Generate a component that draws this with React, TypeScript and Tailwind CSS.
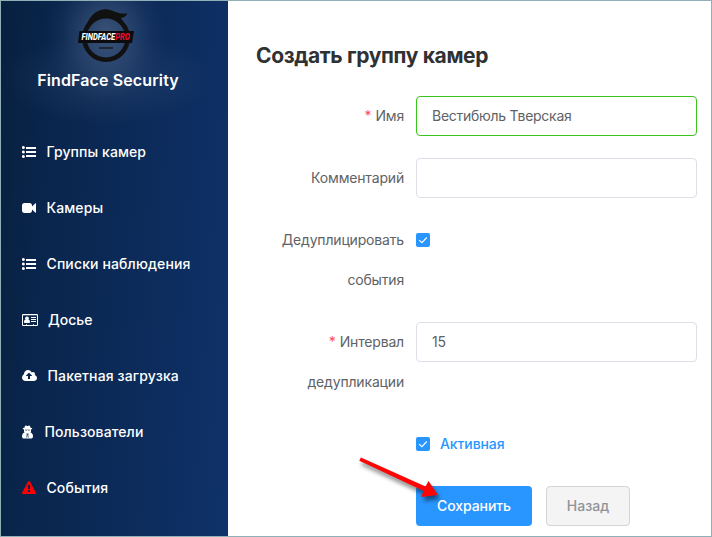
import type { ReactNode } from 'react';

const ListIcon = () => (
  <svg width="14" height="14" viewBox="0 0 14 14" fill="currentColor">
    <circle cx="1.4" cy="2.5" r="1.5" />
    <circle cx="1.4" cy="7" r="1.5" />
    <circle cx="1.4" cy="11.5" r="1.5" />
    <path d="M4 2h10v2H4zM4 6h10v2H4zM4 10h10v2H4z" />
  </svg>
);

const CameraIcon = () => (
  <svg width="14" height="14" viewBox="0 0 1792 1792" fill="currentColor">
    <path d="M1792 352v1088q0 42-39 59-13 5-25 5-27 0-45-19l-403-403v166q0 119-84.5 203.5t-203.5 84.5h-704q-119 0-203.5-84.5t-84.5-203.5v-704q0-119 84.5-203.5t203.5-84.5h704q119 0 203.5 84.5t84.5 203.5v165l403-402q18-19 45-19 12 0 25 5 39 17 39 59z" />
  </svg>
);

const CardIcon = () => (
  <svg width="16" height="14" viewBox="0 0 16 14" fill="currentColor">
    <path fillRule="evenodd" d="M1.2 1h13.6Q16 1 16 2.2v9.6Q16 13 14.8 13H1.2Q0 13 0 11.8V2.2Q0 1 1.2 1zM1 3v8.7q0 .3.3.3H4v-.8h1v.8h6v-.8h1v.8h2.7q.3 0 .3-.3V3q0-.8-.3-.8H1.3Q1 2.2 1 3z" />
    <circle cx="5" cy="5.3" r="1.9" />
    <path d="M2 9.2c0-1.8.6-2.7 1.6-2.7.8.7 2 .7 2.8 0C7.4 6.5 8 7.4 8 9.2q0 .8-.9.8H2.9Q2 10 2 9.2zM9 4h5v1H9zM9 6h5v1H9zM9 8h5v1H9z" />
  </svg>
);

const CloudIcon = () => (
  <svg width="15" height="14" viewBox="0 0 1920 1792" fill="currentColor">
    <path d="M1280 864q0-14-9-23l-352-352q-9-9-23-9t-23 9l-351 351q-10 12-10 24 0 14 9 23t23 9h224v352q0 13 9.5 22.5t22.5 9.5h192q13 0 22.5-9.5t9.5-22.5v-352h224q13 0 22.5-9.5t9.5-22.5zm640 288q0 159-112.5 271.5t-271.5 112.5h-1088q-185 0-316.5-131.5t-131.5-316.5q0-130 70-240t188-165q-2-30-2-43 0-212 150-362t362-150q156 0 285.5 87t188.5 231q71-62 166-62 106 0 181 75t75 181q0 76-41 138 130 31 213.5 135.5t83.5 238.5z" />
  </svg>
);

const AgentIcon = () => (
  <svg width="11" height="14" viewBox="0 0 11 14" fill="currentColor">
    <path fillRule="evenodd" d="M3.7.5c.7 0 1.1.4 1.8.4S6.6.5 7.3.5c.7 0 1 1.2 1.3 2.3 1 .2 1.7.5 1.7.8s-.5.6-1.3.8v1.8c0 .6-.2 1-.5 1.4C10.3 8.2 11 9.7 11 11.2c0 1.5-.8 2.3-2 2.3H2c-1.2 0-2-.8-2-2.3 0-1.5.7-3 2.5-3.6C2.2 7.2 2 6.8 2 6.2V4.4C1.2 4.2.7 3.9.7 3.6s.7-.6 1.7-.8C2.7 1.7 3 .5 3.7.5zM2.9 4.7v.6l1.8.2.5-.4h.6l.5.4 1.8-.2v-.6zM4.2 8.5l.6 1-.4 3h.7l.2-2.800h.4l.2 2.800h.7l-.4-3 .6-1-1.300.3z" />
  </svg>
);

const WarningIcon = () => (
  <svg width="14" height="14" viewBox="0 0 1792 1792" fill="#ff0000">
    <path d="M1024 1375v-190q0-14-9.5-23.5t-22.5-9.5h-192q-13 0-22.5 9.5t-9.5 23.5v190q0 14 9.5 23.5t22.5 9.5h192q13 0 22.5-9.5t9.5-23.5zm-2-374l18-459q0-12-10-19-13-11-24-11h-220q-11 0-24 11-10 7-10 21l17 457q0 10 10 16.5t24 6.5h185q14 0 23.5-6.5t10.5-16.5zm-14-934l768 1408q35 63-2 126-17 29-46.5 46t-63.5 17h-1536q-34 0-63.5-17t-46.5-46q-37-63-2-126l768-1408q17-31 47-49t65-18 65 18 47 49z" />
  </svg>
);

const Logo = () => (
  <svg width="58" height="56" viewBox="0 0 58 56" className="mr-[4px] block">
    <circle cx="29" cy="31" r="21.7" fill="none" stroke="#111111" strokeWidth="4.6" />
    <path d="M8.5 20C12 10 18 3 28 2.2c5-.4 9 2.5 14 3.8 3 .7 6 .5 8.5.3-1 2.5-3.5 4.5-6.5 4.8l3 5.5C42 12 36 10 28 9.5 20 9.5 14 13 8.5 20z" fill="#111111" />
    <path d="M2.5 24H57L55 36H1z" fill="#0c0c0e" />
    <path d="M22 41h14" stroke="#202633" strokeWidth="2" />
    <text x="4.500" y="33.200" fontFamily="Roboto, sans-serif" fontSize="9.200" fontWeight="800" fontStyle="italic" fill="#ffffff" textLength="48.500" lengthAdjust="spacingAndGlyphs">
      FINDFACE<tspan fill="#f00c32">PRO</tspan>
    </text>
  </svg>
);

type Item = { label: string; icon: ReactNode; style: string };

const items: Item[] = [
  { label: 'Группы камер', icon: <ListIcon />, style: 'gap-[10.5px] tracking-[0.1px]' },
  { label: 'Камеры', icon: <CameraIcon />, style: 'gap-[10.5px] tracking-[0.1px]' },
  { label: 'Списки наблюдения', icon: <ListIcon />, style: 'gap-[10.5px] tracking-[0.13px]' },
  { label: 'Досье', icon: <CardIcon />, style: 'gap-[10px] tracking-[0px]' },
  { label: 'Пакетная загрузка', icon: <CloudIcon />, style: 'gap-[10.5px] tracking-[0.13px]' },
  { label: 'Пользователи', icon: <AgentIcon />, style: 'gap-[11.5px] tracking-[0.1px]' },
  { label: 'События', icon: <WarningIcon />, style: 'gap-[10.5px] tracking-[0.1px]' },
];

const Check = () => (
  <span className="flex size-[14px] shrink-0 items-center justify-center rounded-[2px] bg-[#2996ff]">
    <svg width="14" height="14" viewBox="0 0 14 14" fill="none" stroke="white" strokeWidth="1.1">
      <path d="M3.2 7.2l2.7 2.5 4.9-5.2" />
    </svg>
  </span>
);

const Label = ({ lines, required }: { lines: string[]; required?: boolean }) => (
  <div className="flex w-[160px] shrink-0 flex-col items-end pr-3 leading-10 tracking-[-0.17px] text-[#606266]">
    {lines.map((line, i) => (
      <div key={line} className="flex gap-1">
        {required && i === 0 && <span className="text-[#ff5050]">*</span>}
        <span>{line}</span>
      </div>
    ))}
  </div>
);

const Field = ({ value, valid }: { value: string; valid?: boolean }) => (
  <input
    readOnly
    value={value}
    className={`h-10 w-[281px] rounded-[4px] border bg-white px-[15px] pb-[2px] tracking-[-0.27px] text-[#606266] outline-none ${valid ? 'border-[#3bc41c]' : 'border-[#dcdfe6]'}`}
  />
);

export default function App() {
  return (
    <div className="relative flex h-[537px] w-[712px] overflow-hidden border border-[#90b0b8] bg-white font-['Inter','Liberation_Sans',sans-serif] text-sm">
      <aside className="w-[227px] shrink-0 bg-[linear-gradient(94deg,#08203f_0%,#0a264e_25%,#0c2b5a_60%,#0f326a_100%)] text-white">
        <div className="flex h-[123px] flex-col items-center bg-[radial-gradient(ellipse_60px_68px_at_105px_32px,rgba(130,145,170,0.40)_0%,rgba(110,130,165,0.24)_45%,rgba(110,130,165,0.07)_75%,transparent_100%),radial-gradient(ellipse_105px_45px_at_107px_78px,rgba(90,115,155,0.22)_0%,rgba(90,115,155,0.11)_50%,transparent_100%)] pr-[13px] pt-[6px]">
          <Logo />
          <div className="mt-[5px] whitespace-nowrap text-base font-semibold leading-6 tracking-[0.12px]">FindFace Security</div>
        </div>
        <nav>
          {items.map((item) => (
            <div key={item.label} className={`flex h-14 items-center whitespace-nowrap pl-[21px] font-medium ${item.style}`}>
              {item.icon}
              <span>{item.label}</span>
            </div>
          ))}
        </nav>
      </aside>
      <main className="flex-1 pl-[28px] pt-[39px]">
        <h1 className="mb-[24px] text-[21px] font-bold leading-8 tracking-[-0.35px] text-[#303133]">Создать группу камер</h1>
        <div className="mb-[22px] flex">
          <Label required lines={['Имя']} />
          <Field value="Вестибюль Тверская" valid />
        </div>
        <div className="mb-[22px] flex">
          <Label lines={['Комментарий']} />
          <Field value="" />
        </div>
        <div className="mb-[22px] flex">
          <Label lines={['Дедуплицировать', 'события']} />
          <div className="flex h-10 items-center"><Check /></div>
        </div>
        <div className="mb-[22px] flex">
          <Label required lines={['Интервал', 'дедупликации']} />
          <Field value="15" />
        </div>
        <div className="mb-[22px] ml-[160px] flex h-10 items-center gap-[10px] font-medium tracking-[-0.1px] text-[#2996ff]">
          <Check />
          <span>Активная</span>
        </div>
        <div className="ml-[160px] flex gap-[14px]">
          <button className="h-10 w-[116px] rounded-[4px] bg-[#2996ff] font-medium tracking-[-0.1px] text-white">Сохранить</button>
          <button className="h-10 w-[84px] rounded-[4px] border border-[#d3d4d6] bg-[#f4f4f5] font-medium text-[#909399]">Назад</button>
        </div>
      </main>
      <svg className="absolute left-[349px] top-[449px] drop-shadow-[2px_4px_2px_rgba(0,0,0,0.5)]" width="100" height="60" viewBox="350 450 100 60">
        <path d="M359.3 460.8L360.9 457.4 425.5 486.6 428.5 481 438 495 421 497 423.7 491z" fill="#fc0505" />
      </svg>
    </div>
  );
}
